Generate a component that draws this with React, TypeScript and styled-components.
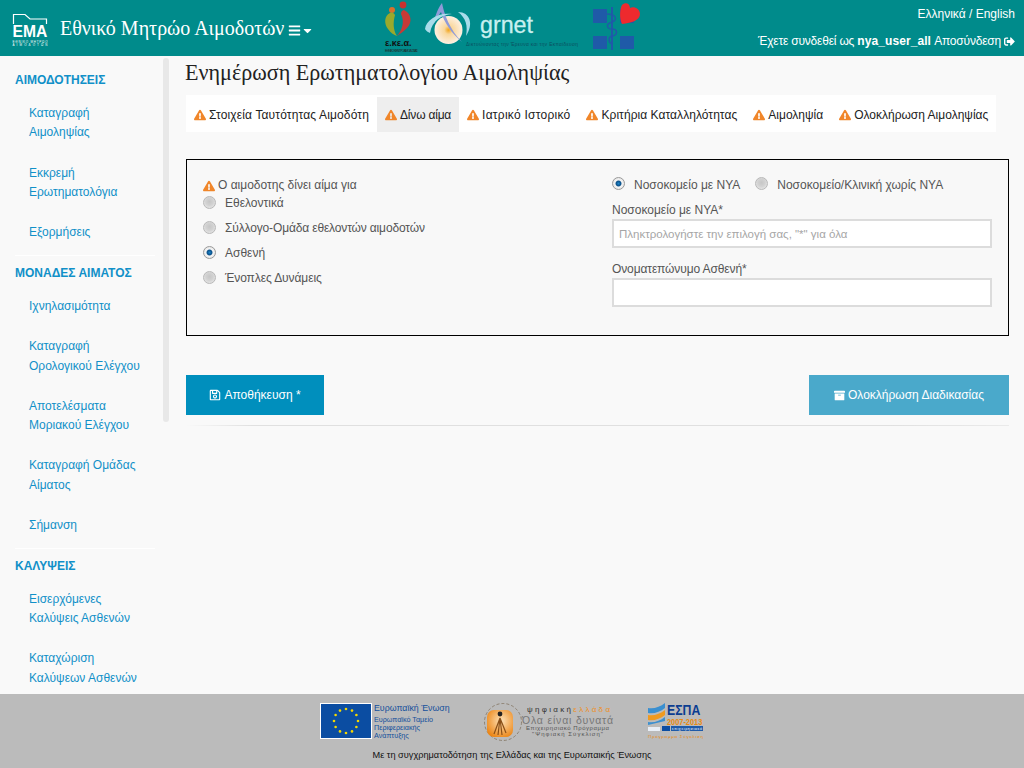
import React from 'react';
import styled, { createGlobalStyle } from 'styled-components';
import { FaBars, FaCaretDown, FaExclamationTriangle, FaRegSave, FaArchive, FaSignOutAlt } from 'react-icons/fa';

const Global = createGlobalStyle`
  html, body { margin: 0; padding: 0; height: 100%; overflow: hidden; background: #f9f9f9; }
  body { font-family: "Liberation Sans", Arial, sans-serif; font-size: 12px; color: #555; }
`;

const Page = styled.div`
  width: 1024px; height: 768px; display: flex; flex-direction: column; overflow: hidden; background: #f9f9f9;
`;
const Header = styled.header`
  height: 56px; flex: none; background: #008b8b; color: #fff; display: flex; align-items: stretch;
`;
const Brand = styled.div`
  width: 380px; flex: none; display: flex; align-items: center; padding-left: 12px; box-sizing: border-box;
`;
const BrandTitle = styled.span`
  font-family: "Liberation Serif", serif; font-size: 20px; margin-left: 12px; margin-top: 1px; white-space: nowrap;
`;
const MenuToggle = styled.span`
  display: inline-flex; align-items: center; margin-left: 4px; margin-top: 5px; font-size: 13px;
`;
const Partners = styled.div`
  flex: none; width: 280px; display: flex; align-items: flex-start;
`;
const UserArea = styled.div`
  flex: 1; display: flex; flex-direction: column; align-items: flex-end; padding: 6px 9px 0 0; font-size: 12px;
`;
const Lang = styled.div`
  height: 22px; line-height: 16px;
`;
const Session = styled.div`
  line-height: 16px; margin-top: 5px; display: flex; align-items: center; gap: 3px; white-space: pre;
`;
const Tight = styled.span`
  letter-spacing: -0.2px;
`;
const Strong = styled.b`
  letter-spacing: 0.08px;
`;
const Body = styled.div`
  flex: 1; min-height: 0; display: flex;
`;
const Sidebar = styled.nav`
  width: 170px; flex: none; position: relative; overflow: hidden; box-sizing: border-box; padding: 15px 15px 0 15px;
`;
const Thumb = styled.div`
  position: absolute; left: 163px; top: 2px; width: 6px; height: 364px; background: #e8e8e8; border-radius: 3px;
`;
const SideHead = styled.div`
  font-size: 12px; font-weight: bold; color: #1190c8; line-height: 18px; height: 18px;
`;
const SideList = styled.ul`
  list-style: none; margin: 15px 0 0; padding: 0;
`;
const SideItem = styled.li`
  color: #1190c8; font-size: 12px; line-height: 19.4px; padding: 0 0 20.7px 14px; width: 125px; white-space: nowrap;
`;
const SideDivider = styled.div`
  height: 1px; background: #fff; margin: -8px 0 8px; width: 140px;
`;
const Main = styled.main`
  flex: 1; min-width: 0; padding: 4px 15px 0 16px;
`;
const Title = styled.h1`
  font-family: "Liberation Serif", serif; font-weight: normal; font-size: 22.1px; line-height: 26px; color: #222; margin: 0 0 0 -1px;
`;
const Tabs = styled.div`
  margin-top: 9px; width: 810px; height: 37px; background: #fff; display: flex; align-items: flex-end;
`;
const Tab = styled.div<{ $active?: boolean; $track: number }>`
  height: 35px; display: flex; align-items: center; gap: 3px; padding: 0 8px; color: #222; white-space: nowrap; font-size: 12px;
  letter-spacing: ${p => p.$track}px;
  background: ${p => (p.$active ? '#eeeeee' : 'transparent')};
`;
const Warn = styled(FaExclamationTriangle)`
  color: #f0862a; font-size: 12px; flex: none;
`;
const Panel = styled.section`
  margin-top: 27px; height: 177px; box-sizing: border-box; border: 1px solid #000; background: #f8f8f8;
  display: grid; grid-template-columns: 409px 380px; padding: 17px 0 0 16px;
`;
const LeftCol = styled.div`
  display: flex; flex-direction: column;
`;
const Question = styled.div`
  display: flex; align-items: center; gap: 3px; line-height: 17px; height: 17px; margin-bottom: -3px; color: #555;
`;
const RadioRow = styled.label<{ $track: number }>`
  display: flex; align-items: center; height: 25px; color: #555; line-height: 17px; letter-spacing: ${p => p.$track}px;
`;
const RadioInput = styled.input.attrs({ type: 'radio', readOnly: true })`
  appearance: none; width: 13px; height: 13px; margin: -2px 9px 0 0; border-radius: 50%; border: 1px solid #b8b8b8; box-sizing: border-box; flex: none;
  background: radial-gradient(circle at 50% 42%, #c6c6c6 0, #d2d2d2 45%, #f1f1f1 100%);
  &:checked { background: radial-gradient(circle at 50% 50%, #1f86c9 0, #0a4f88 32%, #f4f4f4 44%, #dcdcdc 100%); border-color: #9a9a9a; }
`;
const RightCol = styled.div`
  display: flex; flex-direction: column;
`;
const RadioLine = styled.div`
  display: flex; align-items: center; height: 17px; gap: 15px; margin-top: -1px;
`;
const InlineRadio = styled.label`
  display: flex; align-items: center; color: #555;
`;
const FieldLabel = styled.div`
  color: #555; line-height: 16px; margin-top: 9px; height: 17px;
`;
const FieldLabelNext = styled(FieldLabel)`
  margin-top: 13px; letter-spacing: -0.12px;
`;
const TextField = styled.input`
  width: 380px; height: 29px; box-sizing: border-box; border: 2px solid #dcdcdc; background: #fff; padding: 0 5px;
  font: 11.5px "Liberation Sans", Arial, sans-serif; color: #555; margin: 0; display: block; outline: none;
  &::placeholder { color: #a6a6a6; opacity: 1; }
`;
const Actions = styled.div`
  margin-top: 39px; display: flex; justify-content: space-between;
`;
const Button = styled.button<{ $light?: boolean }>`
  height: 40px; width: ${p => (p.$light ? '200px' : '138px')}; border: 0; color: #fff; padding: 0; margin: 0;
  background: ${p => (p.$light ? '#4aa9cb' : '#008fbd')};
  font: 12px "Liberation Sans", Arial, sans-serif; display: flex; align-items: center; justify-content: center; gap: 3px;
`;
const Rule = styled.div`
  height: 1px; margin-top: 10px; background: linear-gradient(to right, rgba(220,220,220,0), #e0e0e0 8%, #e0e0e0 85%, rgba(220,220,220,0.5));
`;
const Footer = styled.footer`
  height: 74px; flex: none; background: #bbbbbb; display: flex; flex-direction: column; align-items: center;
`;
const Logos = styled.div`
  display: flex; height: 52px; align-items: flex-start;
`;
const Funding = styled.div`
  font-size: 9.2px; color: #111; line-height: 12px; margin-top: 3px;
`;

const tiny = { fontFamily: '"Liberation Sans", Arial, sans-serif' };

const EmaLogo = () => (
  <svg width="36" height="36" viewBox="0 0 36 36" aria-label="EMA">
    <path d="M1.5 14 V4.5 H13 L18 9 H34.5 V14" fill="none" stroke="#fff" strokeWidth="1.2" />
    <g transform="translate(0.5 26.5) scale(0.98 1)">
      <text x="0" y="0" fontSize="16" fontWeight="bold" fill="#fff" style={tiny}>EMA</text>
    </g>
    <text x="0.5" y="32.8" fontSize="3" fill="#fff" textLength="35" style={tiny}>ΕΘΝΙΚΟ ΜΗΤΡΩΟ</text>
    <text x="0.5" y="36" fontSize="3" fill="#fff" textLength="35" style={tiny}>ΑΙΜΟΔΟΤΩΝ</text>
  </svg>
);

const PartnersArt = () => (
  <svg width="280" height="56" viewBox="0 0 280 56">
    <defs>
      <radialGradient id="sun" cx="50%" cy="50%" r="50%">
        <stop offset="0" stopColor="#f2a51e" />
        <stop offset="0.3" stopColor="#f9d79c" />
        <stop offset="1" stopColor="#fdf0e2" />
      </radialGradient>
    </defs>
    <g transform="translate(5 0)">
      <circle cx="7" cy="10" r="3" fill="#d8702c" />
      <circle cx="18" cy="5" r="3.4" fill="#c8322f" />
      <path d="M5 13 C-1 16 -1 24 3 29 C6 33 9 35 12 36 C8 30 8 22 10 15 C9 13 7 12 5 13Z" fill="#9aa92c" />
      <path d="M19 10 C26 13 28 22 22 28 C19 31 15 34 12 36 C17 30 20 22 16 14 C16 11 18 10 19 10Z" fill="#c63a36" />
      <text x="0" y="46" fontSize="9" fontWeight="bold" fill="#111" style={tiny}>ε.κε.α.</text>
      <text x="0" y="52" fontSize="3.2" fill="#222" textLength="33" style={tiny}>ΕΘΝΙΚΟ ΚΕΝΤΡΟ ΑΙΜΟΔΟΣΙΑΣ</text>
    </g>
    <g transform="translate(44 0)">
      <circle cx="24.5" cy="30" r="14" fill="url(#sun)" />
      <path d="M9 25 C11 16 14 8 18 3 C20 14 26 30 38 42 C28 34 20 22 17 12 C14 16 12 20 9 25Z" fill="#8f9ad8" />
      <path d="M1 29 C2 20 14 12 28 14 C18 15 8 20 6 33 C4 32 2 31 1 29Z" fill="#a8dcea" />
      <path d="M34 12 C46 12 50 24 42 36 C44 26 42 18 34 12Z" fill="#a8dcea" />
    </g>
    <text x="100" y="33" fontSize="24" fill="#c8f0f0" stroke="#c8f0f0" strokeWidth="0.3" textLength="53" lengthAdjust="spacingAndGlyphs" style={tiny}>grnet</text>
    <text x="86" y="46" fontSize="4.8" fill="#0b4f5f" textLength="112" style={tiny}>Δικτυώνοντας την Έρευνα και την Εκπαίδευση</text>
    <g transform="translate(212 0)">
      <rect x="1" y="9" width="14" height="14" fill="#1f5aa8" />
      <rect x="1" y="36" width="14" height="13" fill="#1f5aa8" />
      <rect x="28" y="36" width="14" height="13" fill="#1f5aa8" />
      <rect x="28" y="9" width="14" height="14" fill="#1f5aa8" />
      <path d="M20 7 V50" stroke="#1f5aa8" strokeWidth="2" />
      <path d="M15 14 C24 14 26 20 20 22 C13 24 15 29 20 29 C26 29 26 35 20 36 C16 37 16 42 20 44" fill="none" stroke="#1f5aa8" strokeWidth="1.5" />
      <path d="M30 24 C27 18 28 8 30 5 C33 2 38 3 38 8 C42 6 48 9 48 14 C48 20 40 23 30 24Z" fill="#ee2a2e" />
    </g>
  </svg>
);

const FooterLogos = () => (
  <svg width="384" height="48" viewBox="0 0 384 48">
    <defs>
      <radialGradient id="orb" cx="55%" cy="40%" r="65%">
        <stop offset="0" stopColor="#fde2b8" />
        <stop offset="1" stopColor="#ec8718" />
      </radialGradient>
    </defs>
    <rect x="0.5" y="9.5" width="51" height="35" fill="#0b4da2" stroke="#fff" strokeWidth="1" />
    {Array.from({ length: 12 }).map((_, i) => {
      const a = (i / 12) * Math.PI * 2;
      return <circle key={i} cx={26 + Math.cos(a) * 12} cy={27 + Math.sin(a) * 12} r="1.3" fill="#f5d800" />;
    })}
    <g fill="#14509c" style={tiny}>
      <text x="54" y="17" fontSize="8.8">Ευρωπαϊκή Ένωση</text>
      <text x="54" y="27.5" fontSize="7.2">Ευρωπαϊκό Ταμείο</text>
      <text x="54" y="35.5" fontSize="7.2">Περιφερειακής</text>
      <text x="54" y="43.5" fontSize="7.2">Ανάπτυξης</text>
    </g>
    <circle cx="183" cy="28" r="18.5" fill="none" stroke="#7a6a55" strokeWidth="0.7" strokeDasharray="3 2" />
    <rect x="167" y="16" width="26" height="27" rx="7" fill="url(#orb)" />
    <circle cx="180" cy="20" r="2.4" fill="#222" />
    <path d="M180 24 L174 40 M180 24 L178 41 M180 24 L182 41 M180 24 L186 39" stroke="#8a5018" strokeWidth="1.2" />
    <g style={tiny}>
      <text x="207" y="18" fontSize="8" fill="#333" textLength="83">ψηφιακή<tspan fill="#ef8f22">ελλάδα</tspan></text>
      <text x="202" y="30" fontSize="10.5" fill="#777" textLength="91">Όλα είναι δυνατά</text>
      <text x="206" y="36" fontSize="6" fill="#555" textLength="83">Επιχειρησιακό Πρόγραμμα</text>
      <text x="212" y="42" fontSize="6" fill="#555" textLength="71">"Ψηφιακή Σύγκλιση"</text>
    </g>
    <path d="M328 14 C334 15 340 13 345 9 V14 C340 18 334 20 328 19Z" fill="#3a8fd0" />
    <path d="M328 21 C334 22 340 20 345 16 V21 C340 25 334 27 328 26Z" fill="#f09a20" />
    <path d="M328 28 C334 29 340 27 345 23 V27 L328 31Z" fill="#3a8fd0" />
    <g transform="translate(347 21) scale(0.82 1)">
      <text x="0" y="0" fontSize="15" fontWeight="bold" fill="#0b3d91" style={tiny}>ΕΣΠΑ</text>
    </g>
    <g transform="translate(347 31) scale(0.82 1)">
      <text x="0" y="0" fontSize="9" fontWeight="bold" fill="#e98a10" style={tiny}>2007-2013</text>
    </g>
    <rect x="328" y="33" width="12" height="4" fill="#e8eef6" />
    <rect x="342" y="32" width="8" height="5" fill="#0b4da2" />
    <rect x="351" y="32" width="32" height="5" fill="#1f5aa8" />
    <text x="352" y="36" fontSize="3.6" fill="#fff" textLength="30" style={tiny}>επιχειρησιακό</text>
    <text x="328" y="44" fontSize="4.4" fill="#e98a10" textLength="55" style={tiny}>Πρόγραμμα Σύγκλιση</text>
  </svg>
);

const sections: { head: string; items: string[][] }[] = [
  { head: 'ΑΙΜΟΔΟΤΗΣΕΙΣ', items: [['Καταγραφή', 'Αιμοληψίας'], ['Εκκρεμή', 'Ερωτηματολόγια'], ['Εξορμήσεις']] },
  { head: 'ΜΟΝΑΔΕΣ ΑΙΜΑΤΟΣ', items: [['Ιχνηλασιμότητα'], ['Καταγραφή', 'Ορολογικού Ελέγχου'], ['Αποτελέσματα', 'Μοριακού Ελέγχου'], ['Καταγραφή Ομάδας', 'Αίματος'], ['Σήμανση']] },
  { head: 'ΚΑΛΥΨΕΙΣ', items: [['Εισερχόμενες', 'Καλύψεις Ασθενών'], ['Καταχώριση', 'Καλύψεων Ασθενών']] },
];
const tabs = [
  { label: 'Στοιχεία Ταυτότητας Αιμοδότη', track: 0.14 },
  { label: 'Δίνω αίμα', track: -0.2 },
  { label: 'Ιατρικό Ιστορικό', track: 0.25 },
  { label: 'Κριτήρια Καταλληλότητας', track: 0.05 },
  { label: 'Αιμοληψία', track: 0 },
  { label: 'Ολοκλήρωση Αιμοληψίας', track: 0 },
];
const reasons = [
  { label: 'Εθελοντικά', track: 0 },
  { label: 'Σύλλογο-Ομάδα εθελοντών αιμοδοτών', track: -0.15 },
  { label: 'Ασθενή', track: 0 },
  { label: 'Ένοπλες Δυνάμεις', track: -0.1 },
];

export default function App() {
  return (
    <Page>
      <Global />
      <Header>
        <Brand>
          <EmaLogo />
          <BrandTitle>Εθνικό Μητρώο Αιμοδοτών</BrandTitle>
          <MenuToggle><FaBars /><FaCaretDown /></MenuToggle>
        </Brand>
        <Partners><PartnersArt /></Partners>
        <UserArea>
          <Lang>Ελληνικά / English</Lang>
          <Session>
            <span><Tight>Έχετε συνδεθεί ως </Tight><Strong>nya_user_all</Strong><Tight> Αποσύνδεση</Tight></span>
            <FaSignOutAlt size={11} />
          </Session>
        </UserArea>
      </Header>
      <Body>
        <Sidebar>
          <Thumb />
          {sections.map((s, i) => (
            <React.Fragment key={s.head}>
              {i > 0 && <SideDivider />}
              <SideHead>{s.head}</SideHead>
              <SideList>
                {s.items.map(lines => (
                  <SideItem key={lines.join()}>{lines.map(l => <div key={l}>{l}</div>)}</SideItem>
                ))}
              </SideList>
            </React.Fragment>
          ))}
        </Sidebar>
        <Main>
          <Title>Ενημέρωση Ερωτηματολογίου Αιμοληψίας</Title>
          <Tabs>
            {tabs.map((t, i) => (
              <Tab key={t.label} $active={i === 1} $track={t.track}><Warn />{t.label}</Tab>
            ))}
          </Tabs>
          <Panel>
            <LeftCol>
              <Question><Warn />Ο αιμοδοτης δίνει αίμα για</Question>
              {reasons.map((r, i) => (
                <RadioRow key={r.label} $track={r.track}><RadioInput name="reason" defaultChecked={i === 2} />{r.label}</RadioRow>
              ))}
            </LeftCol>
            <RightCol>
              <RadioLine>
                <InlineRadio><RadioInput name="hosp" defaultChecked />Νοσοκομείο με ΝΥΑ</InlineRadio>
                <InlineRadio><RadioInput name="hosp" />Νοσοκομείο/Κλινική χωρίς ΝΥΑ</InlineRadio>
              </RadioLine>
              <FieldLabel>Νοσοκομείο με ΝΥΑ*</FieldLabel>
              <TextField placeholder={'Πληκτρολογήστε την επιλογή σας, "*" για όλα'} />
              <FieldLabelNext>Ονοματεπώνυμο Ασθενή*</FieldLabelNext>
              <TextField />
            </RightCol>
          </Panel>
          <Actions>
            <Button><FaRegSave size={12} />Αποθήκευση *</Button>
            <Button $light><FaArchive size={11} />Ολοκλήρωση Διαδικασίας</Button>
          </Actions>
          <Rule />
        </Main>
      </Body>
      <Footer>
        <Logos><FooterLogos /></Logos>
        <Funding>Με τη συγχρηματοδότηση της Ελλάδας και της Ευρωπαικής Ένωσης</Funding>
      </Footer>
    </Page>
  );
}
